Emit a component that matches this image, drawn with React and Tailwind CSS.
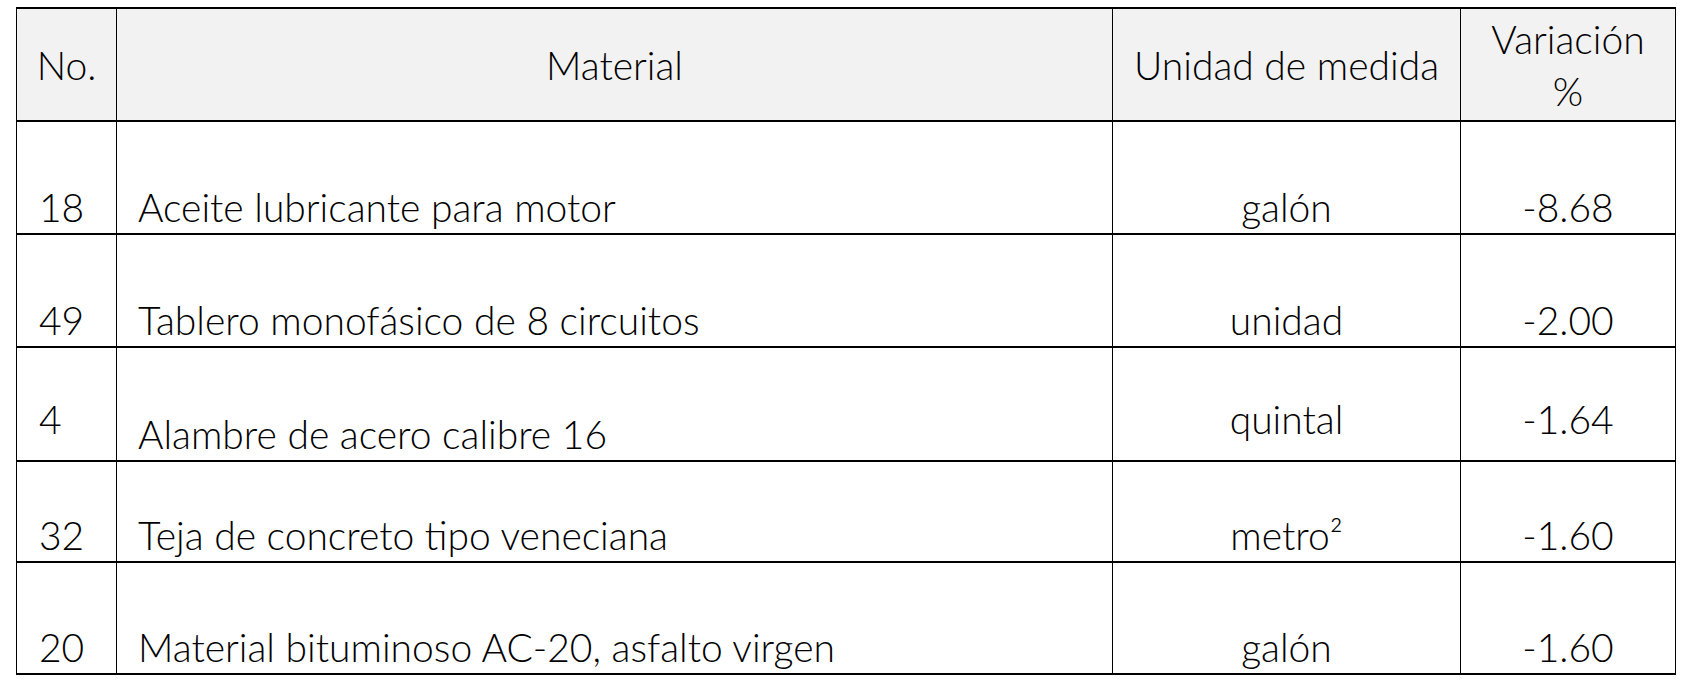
const rows = [
  { no: "18", mat: "Aceite lubricante para motor", unit: "galón", v: "-8.68", h: "h-[113px]", raise: false },
  { no: "49", mat: "Tablero monofásico de 8 circuitos", unit: "unidad", v: "-2.00", h: "h-[113px]", raise: false },
  { no: "4", mat: "Alambre de acero calibre 16", unit: "quintal", v: "-1.64", h: "h-[114px]", raise: true },
  { no: "32", mat: "Teja de concreto tipo veneciana", unit: "metro²", v: "-1.60", h: "h-[101px]", raise: false },
  { no: "20", mat: "Material bituminoso AC-20, asfalto virgen", unit: "galón", v: "-1.60", h: "h-[112px]", raise: false },
];

export default function App() {
  const cell = "border-x border-y-2 border-black";
  return (
    <div className="pl-[16px] pt-[7px] bg-white min-h-[690px] font-['Lato',sans-serif] font-light text-black text-[39px] leading-[52px]">
      <table className="border-collapse w-[1659px] table-fixed">
        <colgroup>
          <col className="w-[100px]" />
          <col className="w-[996px]" />
          <col className="w-[348px]" />
          <col className="w-[215px]" />
        </colgroup>
        <thead>
          <tr className="h-[113px] bg-[#f2f2f2]">
            <th className={`${cell} font-light text-center align-middle p-0`}>No.</th>
            <th className={`${cell} font-light text-center align-middle p-0`}>Material</th>
            <th className={`${cell} font-light text-center align-middle p-0`}>Unidad de medida</th>
            <th className={`${cell} font-light text-center align-middle p-0`}>
              Variación
              <br />%
            </th>
          </tr>
        </thead>
        <tbody>
          {rows.map((r) => (
            <tr key={r.no} className={r.h}>
              <td className={`${cell} align-bottom text-left pl-[22px] ${r.raise ? "pb-[15px]" : "pb-0"}`}>{r.no}</td>
              <td className={`${cell} align-bottom text-left pl-[21px] pb-0 whitespace-nowrap`}>{r.mat}</td>
              <td className={`${cell} align-bottom text-center ${r.raise ? "pb-[15px]" : "pb-0"}`}>{r.unit}</td>
              <td className={`${cell} align-bottom text-center ${r.raise ? "pb-[15px]" : "pb-0"}`}>{r.v}</td>
            </tr>
          ))}
        </tbody>
      </table>
    </div>
  );
}
